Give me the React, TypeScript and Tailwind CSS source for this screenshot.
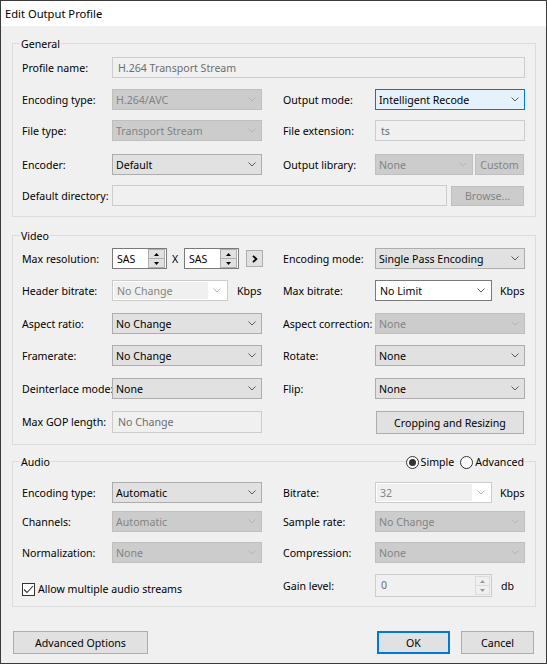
import React from 'react';

type ComboKind = 'normal' | 'focus' | 'disabled' | 'edit' | 'editDisabled';

const Chevron = ({ light }: { light?: boolean }) => (
  <svg width="8" height="5" viewBox="0 0 8 5" className="shrink-0">
    <polyline points="0.5,0.5 4,4 7.5,0.5" fill="none" stroke={light ? '#b4b4b4' : '#5a5a5a'} strokeWidth="1" />
  </svg>
);

const Tri = ({ up, light }: { up?: boolean; light?: boolean }) => (
  <svg width="5" height="3" viewBox="0 0 5 3">
    <polygon points={up ? '0,3 2.5,0 5,3' : '0,0 2.5,3 5,0'} fill={light ? '#9a9a9a' : '#000'} />
  </svg>
);

const Combo = ({ w, value, kind = 'normal' }: { w: string; value: string; kind?: ComboKind }) => {
  if (kind === 'edit' || kind === 'editDisabled') {
    const off = kind === 'editDisabled';
    return (
      <div className={`${w} h-[21px] flex border ${off ? 'border-[#cccccc]' : 'border-[#7a7a7a]'} bg-white p-[1px]`}>
        <div className={`flex-1 flex items-center pl-[3px] ${off ? 'bg-[#f0f0f0] text-[#838383]' : 'text-black'}`}>{value}</div>
        <div className="w-[18px] flex items-center justify-center">
          <Chevron light={off} />
        </div>
      </div>
    );
  }
  const styles: Record<string, string> = {
    normal: 'border-[#adadad] bg-[#e1e1e1] text-black',
    focus: 'border-[#0078d7] bg-[#e5f1fb] text-black',
    disabled: 'border-[#bfbfbf] bg-[#cccccc] text-[#838383]',
  };
  return (
    <div className={`${w} h-[21px] flex items-center border pl-[3px] pr-[5px] ${styles[kind]}`}>
      <span className="flex-1 truncate">{value}</span>
      <Chevron light={kind === 'disabled'} />
    </div>
  );
};

const TextBox = ({ w, value = '', h = 'h-[21px]' }: { w: string; value?: string; h?: string }) => (
  <div className={`${w} ${h} flex items-center border border-[#cccccc] bg-[#f0f0f0] pl-[5px] text-[#6d6d6d]`}>
    {value}
  </div>
);

const Btn = ({ w, h = 'h-[23px]', label, off, def }: { w: string; h?: string; label: string; off?: boolean; def?: boolean }) => (
  <div
    className={`${w} ${h} flex items-center justify-center ${
      def
        ? 'border-2 border-[#0078d7] bg-[#e1e1e1] text-black'
        : off
        ? 'border border-[#bfbfbf] bg-[#cccccc] text-[#838383]'
        : 'border border-[#adadad] bg-[#e1e1e1] text-black'
    }`}
  >
    {label}
  </div>
);

const Spin = ({ value }: { value: string }) => (
  <div className="w-[55px] h-[21px] flex items-center border border-[#7a7a7a] bg-white pl-[4px] pr-[1px]">
    <span className="flex-1">{value}</span>
    <div className="flex flex-col w-[17px] h-[19px]">
      <div className="h-[10px] flex items-center justify-center border border-[#adadad] bg-[#e1e1e1]">
        <Tri up />
      </div>
      <div className="h-[9px] flex items-center justify-center border border-t-0 border-[#adadad] bg-[#e1e1e1]">
        <Tri />
      </div>
    </div>
  </div>
);

const Cell = ({ label, wide, children }: { label: string; wide?: boolean; children: React.ReactNode }) => (
  <div className="flex items-center">
    <div className={`${wide ? 'w-[92px]' : 'w-[90px]'} shrink-0 whitespace-nowrap`}>{label}</div>
    {children}
  </div>
);

const Row = ({ mt = '', h = 'h-[21px]', children }: { mt?: string; h?: string; children: React.ReactNode }) => (
  <div className={`grid grid-cols-[261px_242px] ${h} ${mt}`}>{children}</div>
);

const Group = ({ title, extra, pad, children, mt }: { title: string; extra?: React.ReactNode; pad: string; children: React.ReactNode; mt: string }) => (
  <div className={`relative ml-[11px] w-[524px] border border-[#dcdcdc] pl-[9px] pr-[10px] ${pad} ${mt}`}>
    <div className="absolute -top-[8px] left-[7px] px-[1px] bg-[#f0f0f0] leading-[16px]">{title}</div>
    {extra}
    {children}
  </div>
);

export default function App() {
  return (
    <div className="w-[547px] h-[664px] border border-[#3b3b3b] bg-[#f0f0f0] text-[10.6px] text-black font-['Noto_Sans',sans-serif] leading-[16px] overflow-hidden">
      <div className="h-[25px] bg-white flex items-center pl-[4px] text-[11.2px]">Edit Output Profile</div>

      <Group title="General" pad="pt-[13px] pb-[10px]" mt="mt-[17px]">
        <div className="flex items-center h-[21px]">
          <div className="w-[90px]">Profile name:</div>
          <TextBox w="w-[413px]" value="H.264 Transport Stream" />
        </div>
        <Row mt="mt-[11px]">
          <Cell label="Encoding type:">
            <Combo w="w-[150px]" value="H.264/AVC" kind="disabled" />
          </Cell>
          <Cell label="Output mode:" wide>
            <Combo w="w-[150px]" value="Intelligent Recode" kind="focus" />
          </Cell>
        </Row>
        <Row mt="mt-[10px]">
          <Cell label="File type:">
            <Combo w="w-[150px]" value="Transport Stream" kind="disabled" />
          </Cell>
          <Cell label="File extension:" wide>
            <TextBox w="w-[150px]" value="ts" />
          </Cell>
        </Row>
        <Row mt="mt-[13px]">
          <Cell label="Encoder:">
            <Combo w="w-[150px]" value="Default" />
          </Cell>
          <Cell label="Output library:" wide>
            <Combo w="w-[98px]" value="None" kind="disabled" />
            <div className="ml-[2px]">
              <Btn w="w-[49px]" h="h-[21px]" label="Custom" off />
            </div>
          </Cell>
        </Row>
        <div className="flex items-center h-[21px] mt-[10px]">
          <div className="w-[90px] whitespace-nowrap">Default directory:</div>
          <TextBox w="w-[335px]" />
          <div className="ml-[4px]">
            <Btn w="w-[73px]" h="h-[20px]" label="Browse..." off />
          </div>
        </div>
      </Group>

      <Group title="Video" pad="pt-[12px] pb-[10px]" mt="mt-[18px]">
        <Row>
          <Cell label="Max resolution:">
            <Spin value="SAS" />
            <span className="ml-[5px] w-[12px]">X</span>
            <Spin value="SAS" />
            <div className="ml-[7px] w-[17px] h-[17px] flex items-center justify-center border border-[#adadad] bg-[#e1e1e1]">
              <svg width="6" height="8" viewBox="0 0 6 8">
                <polyline points="1,0.8 4.4,4 1,7.2" fill="none" stroke="#000" strokeWidth="1.8" />
              </svg>
            </div>
          </Cell>
          <Cell label="Encoding mode:" wide>
            <Combo w="w-[150px]" value="Single Pass Encoding" />
          </Cell>
        </Row>
        <Row mt="mt-[11px]">
          <Cell label="Header bitrate:">
            <Combo w="w-[116px]" value="No Change" kind="editDisabled" />
            <span className="ml-[9px]">Kbps</span>
          </Cell>
          <Cell label="Max bitrate:" wide>
            <Combo w="w-[117px]" value="No Limit" kind="edit" />
            <span className="ml-[8px]">Kbps</span>
          </Cell>
        </Row>
        <Row mt="mt-[12px]">
          <Cell label="Aspect ratio:">
            <Combo w="w-[150px]" value="No Change" />
          </Cell>
          <Cell label="Aspect correction:" wide>
            <Combo w="w-[150px]" value="None" kind="disabled" />
          </Cell>
        </Row>
        <Row mt="mt-[11px]">
          <Cell label="Framerate:">
            <Combo w="w-[150px]" value="No Change" />
          </Cell>
          <Cell label="Rotate:" wide>
            <Combo w="w-[150px]" value="None" />
          </Cell>
        </Row>
        <Row mt="mt-[12px]">
          <Cell label="Deinterlace mode:">
            <Combo w="w-[150px]" value="None" />
          </Cell>
          <Cell label="Flip:" wide>
            <Combo w="w-[150px]" value="None" />
          </Cell>
        </Row>
        <Row mt="mt-[11px]" h="h-[24px]">
          <Cell label="Max GOP length:">
            <TextBox w="w-[150px]" h="h-[22px]" value="No Change" />
          </Cell>
          <Cell label="" wide>
            <div className="ml-[1px] mt-[1px]">
              <Btn w="w-[148px]" label="Cropping and Resizing" />
            </div>
          </Cell>
        </Row>
      </Group>

      <Group
        title="Audio"
        pad="pt-[20px] pb-[9px]"
        mt="mt-[16px]"
        extra={
          <div className="absolute -top-[8px] right-[11px] flex items-center bg-[#f0f0f0] leading-[16px]">
            <div className="w-[13px] h-[13px] rounded-full border border-[#333] bg-white flex items-center justify-center">
              <div className="w-[7px] h-[7px] rounded-full bg-[#333]" />
            </div>
            <span className="ml-[2px]">Simple</span>
            <div className="ml-[6px] w-[13px] h-[13px] rounded-full border border-[#333] bg-white" />
            <span className="ml-[2px]">Advanced</span>
          </div>
        }
      >
        <Row>
          <Cell label="Encoding type:">
            <Combo w="w-[150px]" value="Automatic" />
          </Cell>
          <Cell label="Bitrate:" wide>
            <Combo w="w-[117px]" value="32" kind="editDisabled" />
            <span className="ml-[8px]">Kbps</span>
          </Cell>
        </Row>
        <Row mt="mt-[8px]">
          <Cell label="Channels:">
            <Combo w="w-[150px]" value="Automatic" kind="disabled" />
          </Cell>
          <Cell label="Sample rate:" wide>
            <Combo w="w-[150px]" value="No Change" kind="disabled" />
          </Cell>
        </Row>
        <Row mt="mt-[10px]">
          <Cell label="Normalization:">
            <Combo w="w-[150px]" value="None" kind="disabled" />
          </Cell>
          <Cell label="Compression:" wide>
            <Combo w="w-[150px]" value="None" kind="disabled" />
          </Cell>
        </Row>
        <Row mt="mt-[11px]" h="h-[23px]">
          <div className="flex items-start pt-[9px]">
            <div className="w-[13px] h-[13px] border border-[#333] bg-white flex items-center justify-center">
              <svg width="11" height="9" viewBox="0 0 11 9">
                <polyline points="1,4.5 4,7.5 10,1" fill="none" stroke="#333" strokeWidth="1.1" />
              </svg>
            </div>
            <span className="ml-[3px] -mt-[2px]">Allow multiple audio streams</span>
          </div>
          <Cell label="Gain level:" wide>
            <div className="w-[117px] h-[23px] flex border border-[#cccccc] bg-[#f0f0f0]">
              <span className="flex-1 pl-[5px] pt-[2px] text-[#6d6d6d]">0</span>
              <div className="flex flex-col w-[16px] p-[1px] pl-0">
                <div className="flex-1 flex items-center justify-center border border-[#dcdcdc] bg-[#f0f0f0]">
                  <Tri up light />
                </div>
                <div className="flex-1 flex items-center justify-center border border-t-0 border-[#dcdcdc] bg-[#f0f0f0]">
                  <Tri light />
                </div>
              </div>
            </div>
            <span className="ml-[9px]">db</span>
          </Cell>
        </Row>
      </Group>

      <div className="mt-[24px] ml-[12px] mr-[12px] flex items-center">
        <Btn w="w-[135px]" label="Advanced Options" />
        <div className="ml-auto flex gap-[11px]">
          <Btn w="w-[73px]" label="OK" def />
          <Btn w="w-[73px]" label="Cancel" />
        </div>
      </div>
    </div>
  );
}
